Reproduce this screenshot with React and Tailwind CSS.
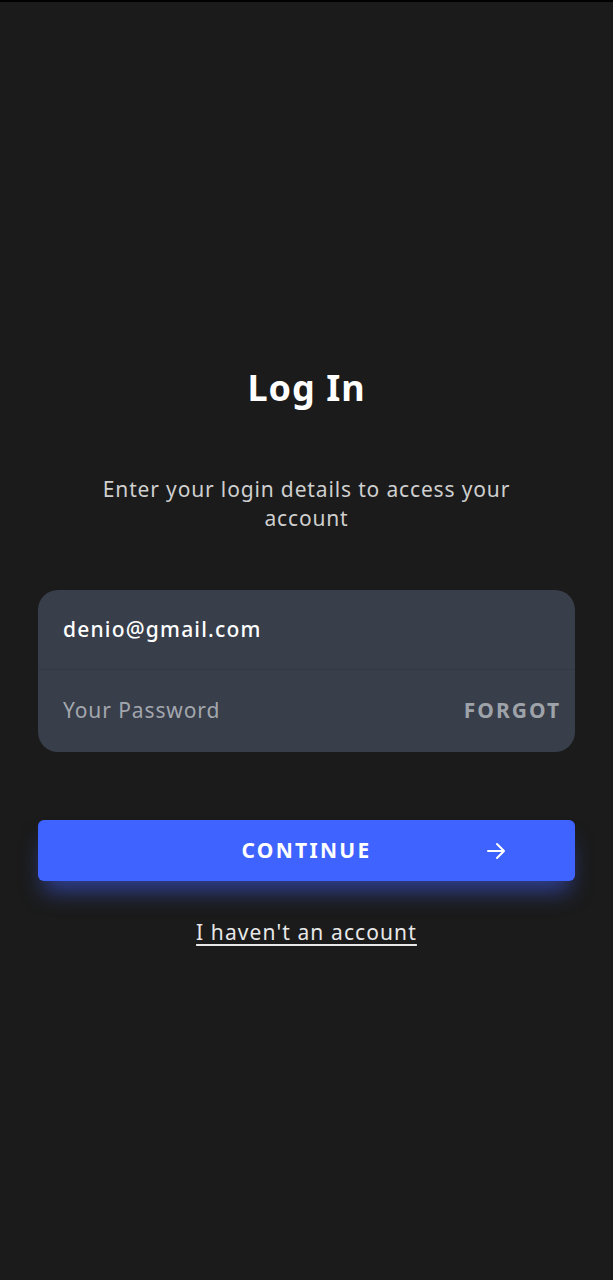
import React, { useState } from 'react';

const App = () => {
  const [email, setEmail] = useState('denio@gmail.com');
  const [password, setPassword] = useState('');

  return (
    <div
      className="min-h-[1280px] w-full bg-[#1b1b1b] border-t-2 border-black flex flex-col items-center"
      style={{ fontFamily: '"Noto Sans", "Open Sans", sans-serif' }}
    >
      <h1 className="mt-[362px] text-[36px] leading-[48px] font-bold tracking-[1px] text-white">Log In</h1>

      <p className="mt-[63px] px-[78px] text-center text-[21px] leading-[29px] tracking-[0.85px] text-[#cfcfcf]">
        Enter your login details to access your account
      </p>

      {/* Formulario */}
      <div className="mt-[57px] w-[537px] rounded-[20px] bg-[#383e4a] overflow-hidden">
        <div className="h-[80px] flex items-center px-[25px] border-b border-[#343a45]">
          <input
            type="email"
            value={email}
            onChange={(e) => setEmail(e.target.value)}
            className="w-full bg-transparent outline-none text-[21px] font-medium tracking-[1.2px] text-white"
          />
        </div>
        <div className="h-[82px] flex items-center pl-[25px] pr-[14px]">
          <input
            type="password"
            placeholder="Your Password"
            value={password}
            onChange={(e) => setPassword(e.target.value)}
            className="flex-1 min-w-0 bg-transparent outline-none text-[21px] tracking-[0.9px] text-white placeholder:text-[#a3a7ae]"
          />
          <button className="text-[21px] font-bold tracking-[2px] text-[#9ea2a9]">FORGOT</button>
        </div>
      </div>

      <button className="mt-[68px] w-[537px] h-[61px] rounded-[6px] bg-[#3f63ff] relative flex items-center justify-center shadow-[0_16px_22px_-6px_rgba(60,90,230,0.6)]">
        <span className="text-[21px] font-bold tracking-[2.3px] text-white">CONTINUE</span>
        <svg
          className="absolute left-[446px] top-1/2 -translate-y-1/2"
          width="24"
          height="24"
          viewBox="0 0 24 24"
          fill="none"
          stroke="white"
          strokeWidth="2"
          strokeLinecap="round"
          strokeLinejoin="round"
        >
          <path d="M4 12h15" />
          <path d="M13 5l7 7-7 7" />
        </svg>
      </button>

      <a href="#" className="mt-[37px] text-[21px] leading-[29px] tracking-[1.1px] text-[#e8e8e8] underline underline-offset-4">
        I haven't an account
      </a>
    </div>
  );
};

export default App;
